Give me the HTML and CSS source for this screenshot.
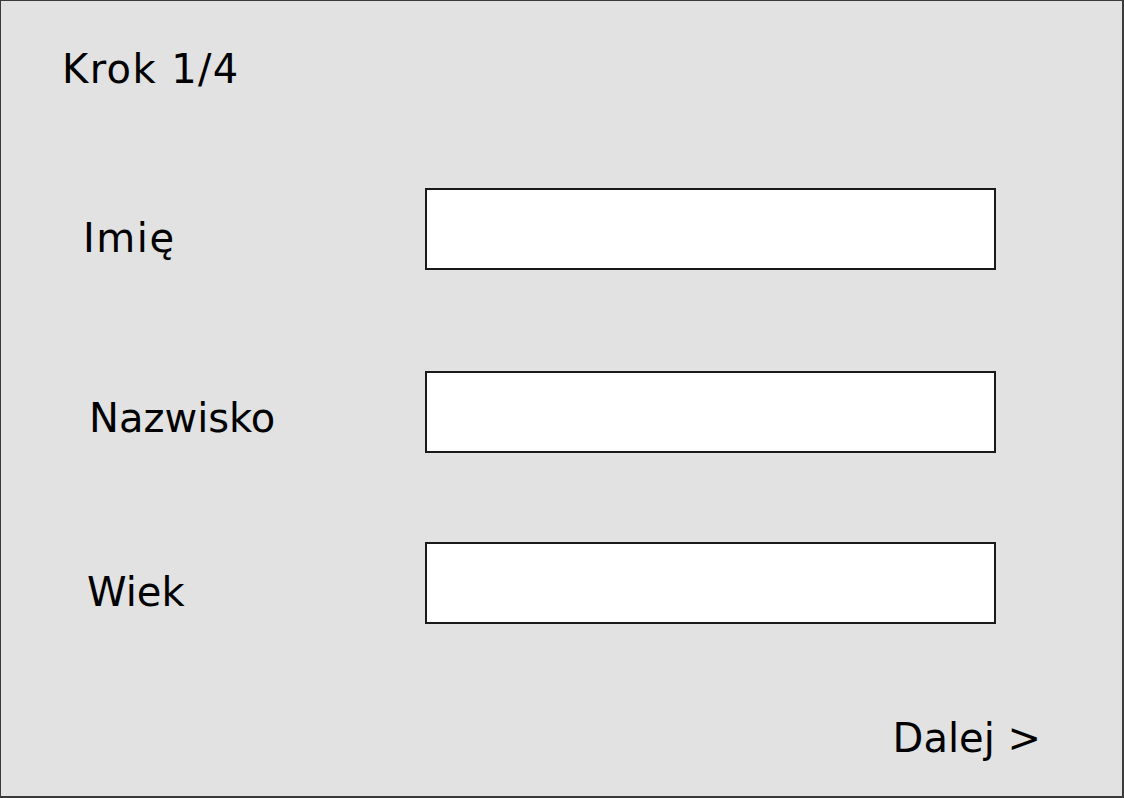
FILE: index.html
```html
<!DOCTYPE html>
<html lang="pl">
<head>
<meta charset="utf-8">
<title>Krok 1/4</title>
<link rel="stylesheet" href="styles.css">
</head>
<body>
<div class="frame">
  <div class="step">Krok 1/4</div>
  <form class="form">
    <div class="row row-first">
      <label class="label label-imie" for="imie">Imię</label>
      <input class="field" id="imie" type="text">
    </div>
    <div class="row row-second">
      <label class="label label-nazwisko" for="nazwisko">Nazwisko</label>
      <input class="field" id="nazwisko" type="text">
    </div>
    <div class="row row-third">
      <label class="label label-wiek" for="wiek">Wiek</label>
      <input class="field" id="wiek" type="text">
    </div>
  </form>
  <div class="footer">
    <span class="next">Dalej &gt;</span>
  </div>
</div>
</body>
</html>
```
FILE: styles.css
```css
* {
  box-sizing: border-box;
}

html, body {
  margin: 0;
  padding: 0;
}

body {
  font-family: "DejaVu Sans", Verdana, sans-serif;
  color: #000;
}

.frame {
  width: 1124px;
  height: 798px;
  background: #e1e2e1;
  border-style: solid;
  border-color: #3a3a3a;
  border-width: 1px 2px 2px 1px;
  display: flex;
  flex-direction: column;
}

.step {
  font-size: 40px;
  line-height: 40px;
  letter-spacing: 1.4px;
  padding: 48px 0 0 61px;
}

.form {
  display: flex;
  flex-direction: column;
  margin: 0;
}

.row {
  display: grid;
  grid-template-columns: 424px 571px;
  align-items: start;
}

.row-first {
  margin-top: 99px;
}

.row-second {
  margin-top: 101px;
}

.row-third {
  margin-top: 89px;
}

.label {
  font-size: 40px;
  line-height: 40px;
  padding: 30px 0 0 79px;
}

.label-imie {
  padding-left: 82px;
  letter-spacing: 1.5px;
}

.label-nazwisko {
  padding-top: 27px;
  padding-left: 88px;
}

.label-wiek {
  padding-left: 86px;
}

.field {
  display: block;
  width: 571px;
  height: 82px;
  margin: 0;
  border: 2px solid #1a1a1a;
  background: #fff;
  border-radius: 0;
  padding: 0 8px;
  font: 32px "DejaVu Sans", sans-serif;
  outline: none;
}

.footer {
  display: flex;
  justify-content: flex-end;
  margin-top: 94px;
  padding-right: 81px;
}

.next {
  font-size: 40px;
  line-height: 40px;
}
```
